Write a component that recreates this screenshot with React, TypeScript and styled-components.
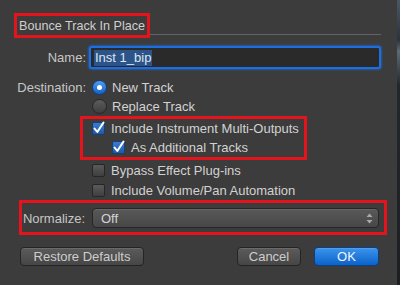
import React from "react";
import styled, { createGlobalStyle } from "styled-components";

const Global = createGlobalStyle`
  html, body { margin: 0; padding: 0; background: #1e2124; }
  body { font-family: "Liberation Sans", Arial, sans-serif; font-size: 13px; }
`;

const Page = styled.div`
  display: flex;
  width: 400px;
  height: 285px;
  overflow: hidden;
`;

const Dialog = styled.div`
  width: 397px;
  height: 285px;
  box-sizing: border-box;
  background: #3c3c3c;
  padding-top: 13px;
  display: flex;
  flex-direction: column;
  color: #d2d2d2;
`;

const EdgeStrip = styled.div`
  width: 3px;
  height: 285px;
  background: linear-gradient(#4a5866 0, #2b333b 14%, #5b6b78 18%, #22272c 30%, #1c1f22 100%);
`;

const TitleRow = styled.div`
  display: flex;
  align-items: flex-end;
  padding-left: 14px;
  padding-right: 16px;
`;

const Highlight = styled.div`
  border: 3px solid #e3141b;
  box-sizing: border-box;
`;

const TitleBox = styled(Highlight)`
  height: 25px;
  display: flex;
  align-items: center;
  padding: 0 2px 0 2px;
  font-size: 12.6px;
  color: #cfcfcf;
  white-space: nowrap;
`;

const Separator = styled.div`
  flex: 1;
  height: 1px;
  background: #646464;
  margin-bottom: 3px;
`;

const Row = styled.div<{ $top?: number; $h?: number }>`
  display: flex;
  align-items: center;
  margin-top: ${(p) => p.$top ?? 0}px;
  height: ${(p) => p.$h ?? 20}px;
`;

const Label = styled.div<{ $w?: number }>`
  width: ${(p) => p.$w ?? 86}px;
  text-align: right;
  color: #c6c6c6;
  flex: none;
  white-space: nowrap;
`;

const Control = styled.div`
  margin-left: 6px;
  display: flex;
  align-items: center;
  white-space: nowrap;
`;

const Input = styled.div`
  margin-left: 3px;
  width: 292px;
  height: 23px;
  box-sizing: border-box;
  background: #2a2a2a;
  border: 2px solid #1b6fe0;
  border-radius: 3px;
  box-shadow: 0 0 2px 1px rgba(30, 110, 230, 0.55);
  display: flex;
  align-items: center;
  padding-left: 3px;
`;

const Selected = styled.span`
  background: #2c5488;
  color: #dfe6f0;
  padding: 1px;
  line-height: 14px;
`;

const Radio = styled.span<{ $on?: boolean }>`
  width: 15px;
  height: 15px;
  border-radius: 50%;
  box-sizing: border-box;
  flex: none;
  display: inline-flex;
  align-items: center;
  justify-content: center;
  background: ${(p) =>
    p.$on
      ? "linear-gradient(#4f9cf0, #1560c8)"
      : "linear-gradient(#5c5c5c, #3e3e3e)"};
  border: 1px solid ${(p) => (p.$on ? "#0f3f86" : "#262626")};
  &::after {
    content: "";
    display: ${(p) => (p.$on ? "block" : "none")};
    width: 5px;
    height: 5px;
    border-radius: 50%;
    background: #fff;
  }
`;

const Box = styled.span<{ $on?: boolean }>`
  width: 13px;
  height: 13px;
  border-radius: 2px;
  box-sizing: border-box;
  flex: none;
  display: inline-flex;
  align-items: center;
  justify-content: center;
  background: ${(p) =>
    p.$on ? "linear-gradient(#3a7bd0, #1f5aa8)" : "linear-gradient(#5a5a5a, #3f3f3f)"};
  border: 1px solid ${(p) => (p.$on ? "#163f78" : "#262626")};
  overflow: visible;
`;

const CheckSvg = styled.svg`
  overflow: visible;
`;

const OptText = styled.span<{ $gap?: number }>`
  margin-left: ${(p) => p.$gap ?? 6}px;
  color: #d2d2d2;
`;

const OptRow = styled.div<{ $indent?: number }>`
  display: flex;
  align-items: center;
  height: 19px;
  padding-left: ${(p) => p.$indent ?? 0}px;
`;

const PlainRow = styled(OptRow)`
  height: 20px;
  padding-left: 92px;
`;

const CheckGroup = styled(Highlight)`
  margin-left: 80px;
  align-self: flex-start;
  padding: 0 5px 0 9px;
`;

const NormalizeBox = styled(Highlight)`
  margin: 0 10px 0 19px;
  height: 35px;
  display: flex;
  align-items: center;
  padding-top: 1px;
`;

const Select = styled.div`
  margin-left: 7px;
  width: 287px;
  height: 20px;
  box-sizing: border-box;
  border: 1px solid #262626;
  border-radius: 4px;
  background: linear-gradient(#595959, #474747);
  box-shadow: inset 0 1px 0 rgba(255, 255, 255, 0.08);
  display: flex;
  align-items: center;
  justify-content: space-between;
  padding: 0 5px 0 8px;
  color: #d4d4d4;
`;

const ButtonBar = styled.div`
  display: flex;
  align-items: center;
  gap: 13px;
  margin-top: 12px;
  padding: 0 18px 0 20px;
`;

const Button = styled.div<{ $w: number; $primary?: boolean }>`
  width: ${(p) => p.$w}px;
  height: 19px;
  box-sizing: border-box;
  border-radius: 4px;
  border: 1px solid ${(p) => (p.$primary ? "#0b3f86" : "#242424")};
  background: ${(p) =>
    p.$primary ? "linear-gradient(#3b94ec, #0b62c9)" : "linear-gradient(#5b5b5b, #464646)"};
  color: ${(p) => (p.$primary ? "#f2f6fb" : "#cdcdcd")};
  display: flex;
  align-items: center;
  justify-content: center;
  box-shadow: inset 0 1px 0 rgba(255, 255, 255, 0.1);
`;

const Spacer = styled.div`
  flex: 1;
`;

const Check = () => (
  <CheckSvg width="13" height="13" viewBox="0 0 13 13">
    <path d="M2.5 6.5 L5.3 10 L11.5 0.5" fill="none" stroke="#fff" strokeWidth="2" strokeLinecap="round" strokeLinejoin="round" />
  </CheckSvg>
);

const Stepper = () => (
  <svg width="7" height="11" viewBox="0 0 7 11">
    <path d="M3.5 0.5 L6.5 4 L0.5 4 Z" fill="#aaa" />
    <path d="M3.5 10.5 L6.5 7 L0.5 7 Z" fill="#aaa" />
  </svg>
);

export default function App() {
  return (
    <Page>
      <Global />
      <Dialog>
        <TitleRow>
          <TitleBox>Bounce Track In Place</TitleBox>
          <Separator />
        </TitleRow>

        <Row $top={8} $h={23}>
          <Label>Name:</Label>
          <Input>
            <Selected>Inst 1_bip</Selected>
          </Input>
        </Row>

        <Row $top={8} $h={20}>
          <Label>Destination:</Label>
          <Control>
            <Radio $on />
            <OptText $gap={5}>New Track</OptText>
          </Control>
        </Row>
        <Row $h={19}>
          <Label />
          <Control>
            <Radio />
            <OptText $gap={5}>Replace Track</OptText>
          </Control>
        </Row>

        <CheckGroup>
          <OptRow>
            <Box $on><Check /></Box>
            <OptText>Include Instrument Multi-Outputs</OptText>
          </OptRow>
          <OptRow $indent={20}>
            <Box $on><Check /></Box>
            <OptText>As Additional Tracks</OptText>
          </OptRow>
        </CheckGroup>

        <PlainRow>
          <Box />
          <OptText>Bypass Effect Plug-ins</OptText>
        </PlainRow>
        <PlainRow>
          <Box />
          <OptText>Include Volume/Pan Automation</OptText>
        </PlainRow>

        <NormalizeBox>
          <Label $w={63}>Normalize:</Label>
          <Select>
            <span>Off</span>
            <Stepper />
          </Select>
        </NormalizeBox>

        <ButtonBar>
          <Button $w={124}>Restore Defaults</Button>
          <Spacer />
          <Button $w={64}>Cancel</Button>
          <Button $w={65} $primary>OK</Button>
        </ButtonBar>
      </Dialog>
      <EdgeStrip />
    </Page>
  );
}
